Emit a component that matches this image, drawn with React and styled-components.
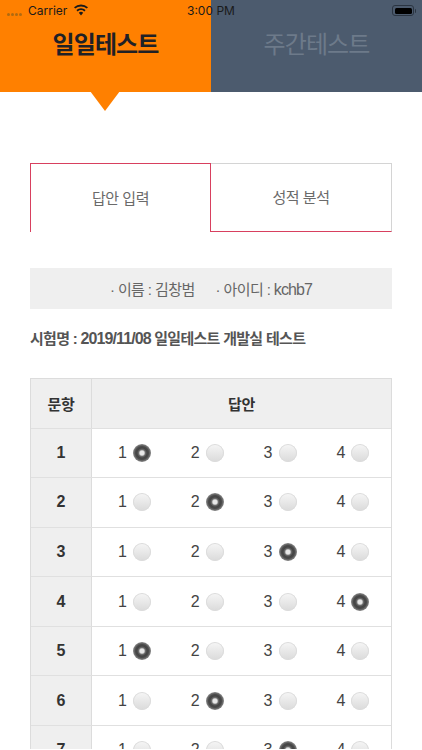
import React from 'react'
import styled, { createGlobalStyle } from 'styled-components'

const GlobalStyle = createGlobalStyle`
  html, body {
    margin: 0;
    padding: 0;
    height: 100%;
    overflow: hidden;
    background: #fff;
  }
  body {
    font-family: "Liberation Sans", "Noto Sans CJK KR", sans-serif;
  }
  * { box-sizing: border-box; }
`

const Page = styled.div`
  position: relative;
  width: 422px;
  height: 749px;
  overflow: hidden;
  background: #fff;
`

const StatusBar = styled.div`
  position: absolute;
  top: 0;
  left: 0;
  right: 0;
  height: 20px;
  color: #1a1a1a;
  font-size: 12px;
  font-family: "Inter", "Liberation Sans", sans-serif;
`

const Dots = styled.div`
  position: absolute;
  left: 7px;
  top: 13px;
  display: flex;
  gap: 1px;
`

const Dot = styled.span`
  width: 3px;
  height: 3px;
  border-radius: 50%;
  background: #b06a10;
`

const Carrier = styled.span`
  position: absolute;
  left: 28px;
  top: 3px;
`

const Wifi = styled.svg`
  position: absolute;
  left: 73px;
  top: 4px;
`

const Clock = styled.span`
  position: absolute;
  left: 187px;
  top: 3px;
`

const Battery = styled.div`
  position: absolute;
  left: 392px;
  top: 5px;
  width: 22px;
  height: 11px;
  padding: 1.5px;
  border: 1px solid #2b3542;
  border-radius: 3px;

  &::before {
    content: '';
    display: block;
    height: 100%;
    background: #000;
    border-radius: 1.5px;
  }
  &::after {
    content: '';
    position: absolute;
    right: -3px;
    top: 2.5px;
    width: 1.5px;
    height: 4px;
    background: #2b3542;
    border-radius: 0 1px 1px 0;
  }
`

const Header = styled.header`
  display: flex;
  height: 91.5px;
`

const HeaderTab = styled.div`
  position: relative;
  flex: 0 0 211px;
  padding-top: 30px;
  text-align: center;
  font-size: 24px;
  line-height: 30px;
  letter-spacing: -0.9px;
  font-weight: ${p => (p.$active ? 700 : 400)};
  background: ${p => (p.$active ? '#ff8000' : '#4c5b6e')};
  color: ${p => (p.$active ? '#1f2126' : '#6d7a8a')};

  ${p => p.$active && `
    &::after {
      content: '';
      position: absolute;
      left: 90px;
      top: 91px;
      border-left: 15px solid transparent;
      border-right: 15px solid transparent;
      border-top: 20px solid #ff8000;
    }
  `}
`

const Content = styled.main`
  padding: 71.5px 30px 0;
`

const Tabs = styled.div`
  display: flex;
  height: 69px;
`

const Tab = styled.div`
  flex: 0 0 50%;
  display: flex;
  align-items: center;
  justify-content: center;
  padding-bottom: 2px;
  font-size: 15px;
  letter-spacing: -0.5px;
  color: #6a6a6a;
  background: #fff;
  border-style: solid;
  border-color: ${p => (p.$active ? '#d8405f' : '#d4d4d4')};
  border-width: ${p => (p.$active ? '1px 1px 0 1px' : '1px 1px 1px 0')};
  ${p => !p.$active && 'border-bottom-color: #d8405f;'}
`

const InfoBar = styled.div`
  display: flex;
  align-items: center;
  justify-content: center;
  gap: 21px;
  height: 41px;
  margin-top: 36px;
  padding-bottom: 1px;
  background: #efefef;
  font-size: 15px;
  letter-spacing: -0.6px;
  color: #666;
`

const UserId = styled.span`
  font-size: 16px;
  letter-spacing: -0.9px;
`

const ExamTitle = styled.h2`
  margin: 20px 0 0;
  font-size: 15px;
  line-height: 20px;
  font-weight: 700;
  letter-spacing: -0.7px;
  color: #555;
`

const ExamDate = styled.span`
  font-size: 16px;
  letter-spacing: -0.9px;
`

const Table = styled.div`
  margin-top: 29px;
  border: solid #dcdcdc;
  border-width: 1px 1px 0 1px;
`

const Row = styled.div`
  display: grid;
  grid-template-columns: 61px 1fr;
  height: ${p => (p.$head ? '49.5px' : '49.6px')};
  border-bottom: 1.5px solid #e0e0e0;
`

const NumCell = styled.div`
  display: flex;
  align-items: center;
  justify-content: center;
  background: #efefef;
  border-right: 1px solid #dcdcdc;
  font-size: ${p => (p.$label ? '15px' : '16px')};
  font-weight: 700;
  letter-spacing: ${p => (p.$label ? '-0.4px' : '0')};
  color: #333;
`

const HeadCell = styled.div`
  display: flex;
  align-items: center;
  justify-content: center;
  background: #efefef;
  font-size: 15px;
  font-weight: 700;
  letter-spacing: -0.4px;
  color: #333;
`

const Choices = styled.div`
  display: grid;
  grid-template-columns: repeat(4, 72.8px);
  align-items: center;
  padding-left: 26px;
`

const Choice = styled.label`
  display: flex;
  align-items: center;
  gap: 6px;
  font-size: 16px;
  color: #444;
`

const Radio = styled.span`
  width: 18px;
  height: 18px;
  border-radius: 50%;
  ${p => p.$checked ? `
    background: radial-gradient(circle at 50% 50%, #e8e8e8 0 2px, #6a6a6a 3.5px, #444 5px, #4a4a4a 6.5px, #8a8a8a 9px);
  ` : `
    background: linear-gradient(#f6f6f6, #dadada);
    box-shadow: inset 0 0 0 1px #dcdcdc;
  `}
`

const answers = [1, 2, 3, 4, 1, 2, 3]

export default function App() {
  return (
    <Page>
      <GlobalStyle />
      <Header>
        <HeaderTab $active>일일테스트</HeaderTab>
        <HeaderTab>주간테스트</HeaderTab>
      </Header>
      <StatusBar>
        <Dots>
          <Dot /><Dot /><Dot /><Dot />
        </Dots>
        <Carrier>Carrier</Carrier>
        <Wifi width="16" height="12" viewBox="0 0 16 12">
          <path d="M8 11.5 5.8 8.8a3.4 3.4 0 0 1 4.4 0Z" fill="#1a1a1a" />
          <path d="M4.6 7.4a5.2 5.2 0 0 1 6.8 0l1.2-1.4a7.1 7.1 0 0 0-9.2 0Z" fill="#1a1a1a" />
          <path d="M2.2 4.6a8.9 8.9 0 0 1 11.6 0L15 3.2a10.8 10.8 0 0 0-14 0Z" fill="#1a1a1a" />
        </Wifi>
        <Clock>3:00 PM</Clock>
        <Battery />
      </StatusBar>
      <Content>
        <Tabs>
          <Tab $active>답안 입력</Tab>
          <Tab>성적 분석</Tab>
        </Tabs>
        <InfoBar>
          <span>· 이름 : 김창범</span>
          <span>· 아이디 : <UserId>kchb7</UserId></span>
        </InfoBar>
        <ExamTitle>시험명 : <ExamDate>2019/11/08</ExamDate> 일일테스트 개발실 테스트</ExamTitle>
        <Table>
          <Row $head>
            <NumCell $label>문항</NumCell>
            <HeadCell>답안</HeadCell>
          </Row>
          {answers.map((answer, i) => (
            <Row key={i}>
              <NumCell>{i + 1}</NumCell>
              <Choices>
                {[1, 2, 3, 4].map(n => (
                  <Choice key={n}>
                    {n}
                    <Radio $checked={n === answer} />
                  </Choice>
                ))}
              </Choices>
            </Row>
          ))}
        </Table>
      </Content>
    </Page>
  )
}
